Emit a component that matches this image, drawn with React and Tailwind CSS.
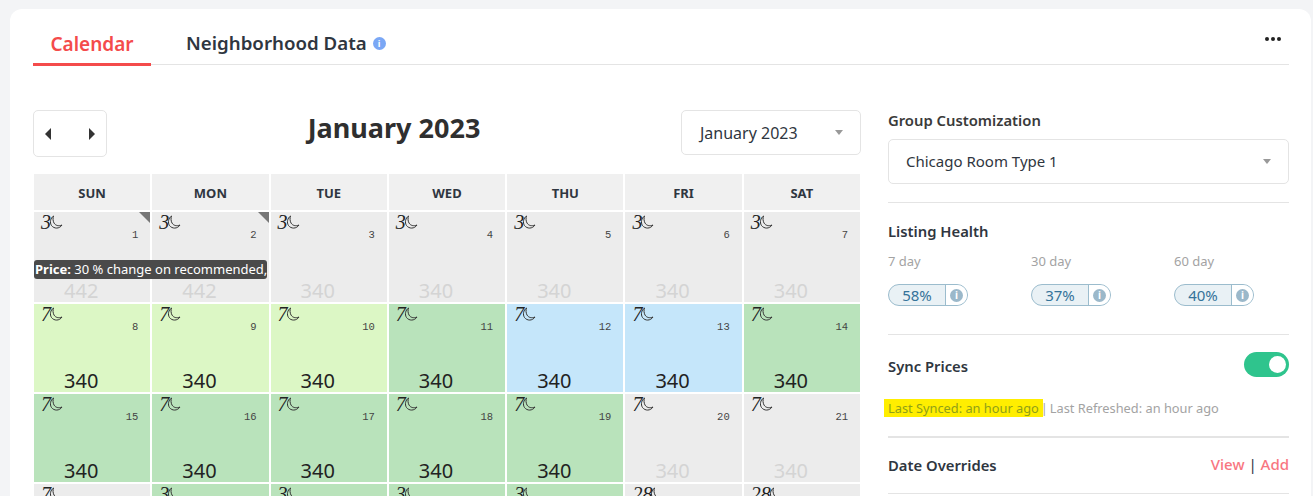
const weeks = [
  [
    { day: 1, price: 442, bg: 'bg-[#ececec]', nights: '3', flag: true },
    { day: 2, price: 442, bg: 'bg-[#ececec]', nights: '3', flag: true },
    { day: 3, price: 340, bg: 'bg-[#ececec]', nights: '3' },
    { day: 4, price: 340, bg: 'bg-[#ececec]', nights: '3' },
    { day: 5, price: 340, bg: 'bg-[#ececec]', nights: '3' },
    { day: 6, price: 340, bg: 'bg-[#ececec]', nights: '3' },
    { day: 7, price: 340, bg: 'bg-[#ececec]', nights: '3' },
  ],
  [
    { day: 8, price: 340, bg: 'bg-[#dcf7c5]', nights: '7', active: true },
    { day: 9, price: 340, bg: 'bg-[#dcf7c5]', nights: '7', active: true },
    { day: 10, price: 340, bg: 'bg-[#dcf7c5]', nights: '7', active: true },
    { day: 11, price: 340, bg: 'bg-[#b9e3bb]', nights: '7', active: true },
    { day: 12, price: 340, bg: 'bg-[#c5e6fa]', nights: '7', active: true },
    { day: 13, price: 340, bg: 'bg-[#c5e6fa]', nights: '7', active: true },
    { day: 14, price: 340, bg: 'bg-[#b9e3bb]', nights: '7', active: true },
  ],
  [
    { day: 15, price: 340, bg: 'bg-[#b9e3bb]', nights: '7', active: true },
    { day: 16, price: 340, bg: 'bg-[#b9e3bb]', nights: '7', active: true },
    { day: 17, price: 340, bg: 'bg-[#b9e3bb]', nights: '7', active: true },
    { day: 18, price: 340, bg: 'bg-[#b9e3bb]', nights: '7', active: true },
    { day: 19, price: 340, bg: 'bg-[#b9e3bb]', nights: '7', active: true },
    { day: 20, price: 340, bg: 'bg-[#ececec]', nights: '7' },
    { day: 21, price: 340, bg: 'bg-[#ececec]', nights: '7' },
  ],
  [
    { day: 22, price: 340, bg: 'bg-[#ececec]', nights: '7' },
    { day: 23, price: 340, bg: 'bg-[#b9e3bb]', nights: '3', active: true },
    { day: 24, price: 340, bg: 'bg-[#b9e3bb]', nights: '3', active: true },
    { day: 25, price: 340, bg: 'bg-[#b9e3bb]', nights: '3', active: true },
    { day: 26, price: 340, bg: 'bg-[#b9e3bb]', nights: '3', active: true },
    { day: 27, price: 340, bg: 'bg-[#ececec]', nights: '28' },
    { day: 28, price: 340, bg: 'bg-[#ececec]', nights: '28' },
  ],
]

const days = ['SUN', 'MON', 'TUE', 'WED', 'THU', 'FRI', 'SAT']

function Moon() {
  return (
    <svg width="15" height="15" viewBox="0 0 15 15" fill="none" stroke="#333" strokeWidth="1" className="-ml-[3px] shrink-0">
      <path d="M5.500 1C2.500 3 1.500 7.500 3.500 10.500C6 14 11.500 14 14 10C10.500 11.500 7.500 10.500 6 8C4.800 5.800 4.800 3 5.500 1Z" />
    </svg>
  )
}

function Cell({ cell, rowClass }) {
  return (
    <div className={`relative ${rowClass} ${cell.bg}`}>
      {cell.flag && (
        <span className="absolute right-0 top-0 h-0 w-0 border-l-[11px] border-t-[11px] border-l-transparent border-t-[#777777]" />
      )}
      <div className="flex h-[18px] items-start pl-[7px] pt-[3px]">
        <span className="font-['Liberation_Serif',serif] text-[20px] italic leading-[15px] text-[#222]">{cell.nights}</span>
        <Moon />
      </div>
      <div className="absolute right-[12px] top-[16px] font-['Liberation_Mono',monospace] text-[10.500px] leading-[14px] text-[#444]">{cell.day}</div>
      <div className={`absolute bottom-0 left-[30px] text-[20px] leading-[22px] ${cell.active ? 'text-[#222]' : 'text-[#d4d4d4]'}`}>{cell.price}</div>
    </div>
  )
}

function Caret() {
  return <span className="h-0 w-0 border-x-[4.500px] border-t-[5px] border-x-transparent border-t-[#999999]" />
}

function HealthPill({ label, value }) {
  return (
    <div className="w-[143px] shrink-0">
      <div className="text-[13px] leading-[18px] text-[#a3a3a3]">{label}</div>
      <div className="mt-[14px] flex h-[22px] w-[80px] items-center rounded-full border border-[#9bbccd] bg-[#e9f1f5]">
        <span className="flex-1 text-center text-[15px] text-[#35739a]">{value}</span>
        <span className="flex h-full w-[22px] items-center justify-center rounded-r-full border-l border-[#9bbccd] bg-white">
          <span className="flex h-[13px] w-[13px] items-center justify-center rounded-full bg-[#9bb8ca] text-[10px] font-bold leading-none text-white">i</span>
        </span>
      </div>
    </div>
  )
}

export default function App() {
  return (
    <div className="h-[496px] overflow-hidden bg-[#f3f4f6] pl-[10px] pr-[2px] pt-[9px] font-['Noto_Sans',sans-serif]">
      <div className="h-[600px] rounded-t-[12px] bg-white pl-[23px] pr-[22px]">
        <div className="flex h-[56px] items-stretch border-b border-[#e4e4e4]">
          <div className="flex h-[57px] w-[118px] items-center justify-center border-b-[3px] border-[#f44b4b] pt-[17px] text-[19px] font-semibold text-[#f44b4b]">
            Calendar
          </div>
          <div className="ml-[35px] flex items-center gap-[6px] pt-[14px] text-[18.700px] font-semibold text-[#2f3640]">
            Neighborhood Data
            <span className="flex h-[13px] w-[13px] items-center justify-center rounded-full bg-[#7aa7f5] text-[9px] font-bold text-white">i</span>
          </div>
          <div className="ml-auto mr-[8px] flex items-center gap-[2px] pt-[4px]">
            <span className="h-[4px] w-[4px] rounded-full bg-[#222]" />
            <span className="h-[4px] w-[4px] rounded-full bg-[#222]" />
            <span className="h-[4px] w-[4px] rounded-full bg-[#222]" />
          </div>
        </div>

        <div className="mt-[45px] flex">
          <div className="w-[828px] shrink-0">
            <div className="flex h-[64px] items-start justify-between">
              <div className="flex h-[47px] w-[74px] items-center justify-between rounded-[5px] border border-[#e4e4e4] px-[11px]">
                <span className="h-0 w-0 border-y-[6px] border-r-[6px] border-y-transparent border-r-[#333]" />
                <span className="h-0 w-0 border-y-[6px] border-l-[6px] border-y-transparent border-l-[#333]" />
              </div>
              <h1 className="text-[27px] font-bold leading-[36px] text-[#2f2f2f]">January 2023</h1>
              <div className="flex h-[45px] w-[180px] items-center justify-between rounded-[5px] border border-[#e4e4e4] pl-[18px] pr-[17px] text-[16px] text-[#2f3640]">
                January 2023
                <Caret />
              </div>
            </div>

            <div className="relative ml-px flex w-[826px] flex-col gap-[2px]">
              <div className="grid grid-cols-7 gap-[2px]">
                {days.map((d) => (
                  <div key={d} className="flex h-[36px] items-center justify-center bg-[#f0f0f0] pt-[3px] text-[13px] font-bold text-[#2f3640]">
                    {d}
                  </div>
                ))}
              </div>
              {weeks.map((week, i) => (
                <div key={i} className="grid grid-cols-7 gap-[2px]">
                  {week.map((cell) => (
                    <Cell key={cell.day} cell={cell} rowClass={i === 0 ? 'h-[90px]' : 'h-[88px]'} />
                  ))}
                </div>
              ))}
              <div className="absolute left-0 top-[86px] flex h-[19px] w-[233px] items-center whitespace-nowrap rounded-[3px] bg-[#4a4a4a] pl-[1px] text-[13px] text-white">
                <b className="font-bold">Price:</b>&nbsp;30 % change on recommended,
              </div>
            </div>
          </div>

          <div className="ml-[27px] w-[401px] shrink-0">
            <div className="text-[14.800px] font-semibold leading-[20px] text-[#3a3a3a]">Group Customization</div>
            <div className="mt-[9px] flex h-[45px] items-center justify-between rounded-[5px] border border-[#e4e4e4] pl-[17px] pr-[17px] text-[15px] text-[#2f3640]">
              Chicago Room Type 1
              <Caret />
            </div>
            <div className="mt-[18px] border-t border-[#e4e4e4] pt-[18px]">
              <div className="text-[14.800px] font-semibold leading-[20px] text-[#2f3640]">Listing Health</div>
              <div className="mt-[11px] flex">
                <HealthPill label="7 day" value="58%" />
                <HealthPill label="30 day" value="37%" />
                <HealthPill label="60 day" value="40%" />
              </div>
            </div>
            <div className="mt-[28px] border-t border-[#e4e4e4] pt-[17px]">
              <div className="flex items-start justify-between">
                <span className="pt-[3px] text-[14.800px] font-semibold text-[#2f3640]">Sync Prices</span>
                <span className="flex h-[25px] w-[45px] items-center justify-end rounded-full bg-[#2fc48d] pr-[3px]">
                  <span className="h-[17px] w-[17px] rounded-full bg-white" />
                </span>
              </div>
              <div className="mt-[24px] -ml-[4px] whitespace-nowrap text-[12.800px] leading-[15px] text-[#a3a3a3]">
                <span className="bg-[#ffee00] pl-[4px] pr-[4px] text-[#8f9f18]">Last Synced: an hour ago</span>
                <span className="-ml-[2px] inline-block w-[9px]">|</span>
                <span>Last Refreshed: an hour ago</span>
              </div>
            </div>
            <div className="mt-[20px] flex h-[58px] items-center justify-between border-y border-t-2 border-[#e4e4e4] pb-[2px]">
              <span className="text-[14.800px] font-semibold text-[#2f3640]">Date Overrides</span>
              <span className="text-[15px] font-medium text-[#f87681]">
                View <span className="font-normal text-[#2f3640]">|</span> Add
              </span>
            </div>
          </div>
        </div>
      </div>
    </div>
  )
}
